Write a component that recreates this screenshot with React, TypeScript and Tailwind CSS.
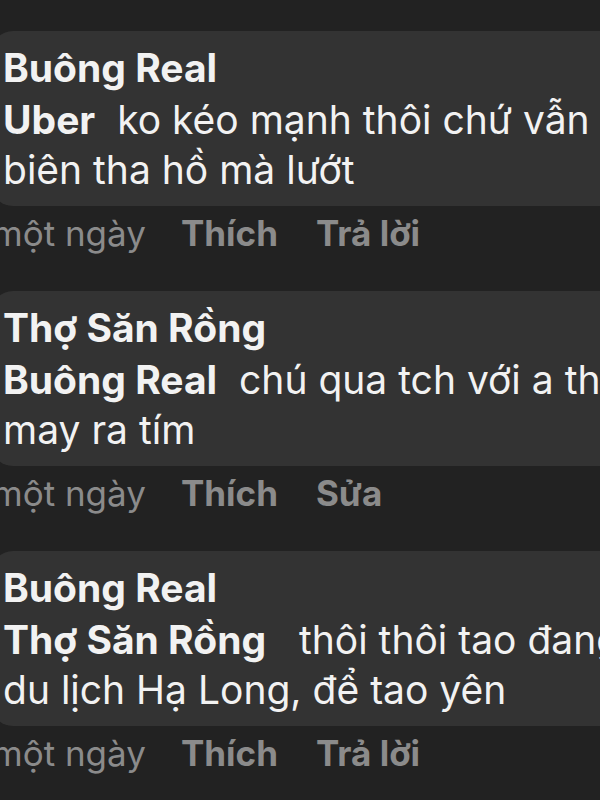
import React from "react";

type C = { name: string; tag: string; gap: string; rest: string; line2: string; action: string };

const comments: C[] = [
  { name: "Buông Real", tag: "Uber", gap: "  ", rest: "ko kéo mạnh thôi chứ vẫn được", line2: "biên tha hồ mà lướt", action: "Trả lời" },
  { name: "Thợ Săn Rồng", tag: "Buông Real", gap: "  ", rest: "chú qua tch với a thử", line2: "may ra tím", action: "Sửa" },
  { name: "Buông Real", tag: "Thợ Săn Rồng", gap: "   ", rest: "thôi thôi tao đang đi", line2: "du lịch Hạ Long, để tao yên", action: "Trả lời" },
];

export default function App() {
  return (
    <div
      className="w-[600px] h-[800px] overflow-hidden bg-[#222222] pt-[31px]"
      style={{ fontFamily: "Inter, 'Noto Sans', sans-serif" }}
    >
      <div className="ml-[-9px] w-[760px] flex flex-col">
        {comments.map((c, i) => (
          <div key={i} className="flex flex-col">
            <div className="rounded-[22px] bg-[#333333] pl-[12px] pt-[12px] pb-[11px] text-[39px] leading-[50px] text-[#f2f2f2] whitespace-pre">
              <div className="font-bold mb-[2px]">{c.name}</div>
              <div>
                <span className="font-bold">{c.tag}</span>
                {c.gap}
                {c.rest}
              </div>
              <div>{c.line2}</div>
            </div>
            <div className="flex items-center h-[54px] pl-[1px] text-[35px] text-[#8b8b8b] whitespace-pre">
              <span>một ngày</span>
              <span className="font-bold ml-[35px]">Thích</span>
              <span className="font-bold ml-[38px]">{c.action}</span>
            </div>
            <div className="h-[31px]" />
          </div>
        ))}
      </div>
    </div>
  );
}
